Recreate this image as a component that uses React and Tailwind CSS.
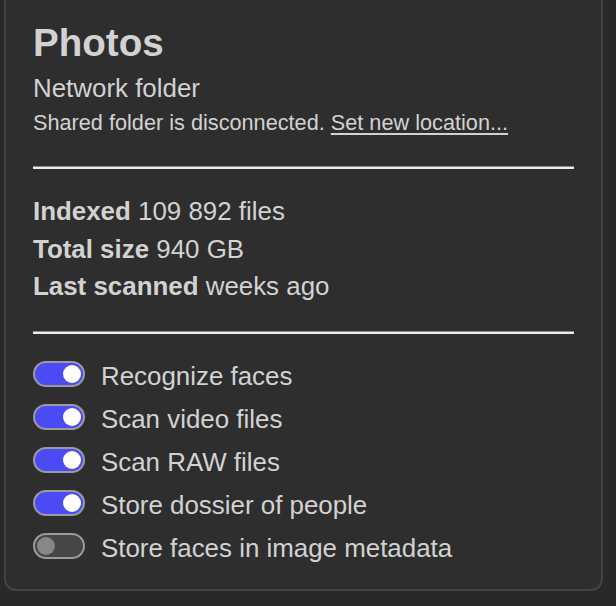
import React, { useState } from 'react';

const OPTIONS = [
  { id: 'faces', label: 'Recognize faces', on: true },
  { id: 'video', label: 'Scan video files', on: true },
  { id: 'raw', label: 'Scan RAW files', on: true },
  { id: 'dossier', label: 'Store dossier of people', on: true },
  { id: 'meta', label: 'Store faces in image metadata', on: false }
];

function Toggle({ on, onChange }) {
  return (
    <button
      type="button"
      onClick={onChange}
      className={`flex h-[26px] w-[52px] shrink-0 items-center rounded-full border-2 border-[#9b9b9b] px-[2px] ${
        on ? 'justify-end bg-[#4b4bf6]' : 'justify-start bg-[#464646]'
      }`}
    >
      <span className={`block h-[18px] w-[18px] rounded-full ${on ? 'bg-white' : 'bg-[#878787]'}`} />
    </button>
  );
}

function Rule() {
  return <div className="h-[3px] border-t border-[#8d8d8d] bg-[#ececec]" />;
}

export default function App() {
  const [options, setOptions] = useState(OPTIONS);

  const flip = (id) => {
    setOptions((current) => current.map((o) => (o.id === id ? { ...o, on: !o.on } : o)));
  };

  return (
    <div className="min-h-[606px] bg-[#29292c] font-['Liberation_Sans',Arial,sans-serif] text-[#d2d2d2]">
      <div className="ml-[4px] w-[599px] rounded-b-[12px] border-2 border-t-0 border-[#444446] bg-[#2e2e2e] px-[27px] pb-[21px] pt-[21px]">
        <h1 className="text-[38.6px] font-bold leading-[44px]">Photos</h1>
        <div className="mt-[8px] text-[25.9px] leading-[30px]">Network folder</div>
        <div className="mt-[7px] text-[21.7px] leading-[26px]">
          Shared folder is disconnected.{' '}
          <a href="#" className="underline decoration-[1.5px] underline-offset-[3px]">
            Set new location...
          </a>
        </div>

        <div className="mt-[30px]">
          <Rule />
        </div>

        <div className="mt-[24px] text-[25.9px] leading-[37.6px]">
          <div>
            <span className="font-bold">Indexed</span> 109 892 files
          </div>
          <div>
            <span className="font-bold">Total size</span> 940 GB
          </div>
          <div>
            <span className="font-bold">Last scanned</span> weeks ago
          </div>
        </div>

        <div className="mt-[25px]">
          <Rule />
        </div>

        <div className="mt-[19px]">
          {options.map((o) => (
            <div key={o.id} className="flex h-[43px] items-center gap-[16px]">
              <Toggle on={o.on} onChange={() => flip(o.id)} />
              <span className="mt-[3px] text-[25.9px] leading-[30px]">{o.label}</span>
            </div>
          ))}
        </div>
      </div>
    </div>
  );
}
